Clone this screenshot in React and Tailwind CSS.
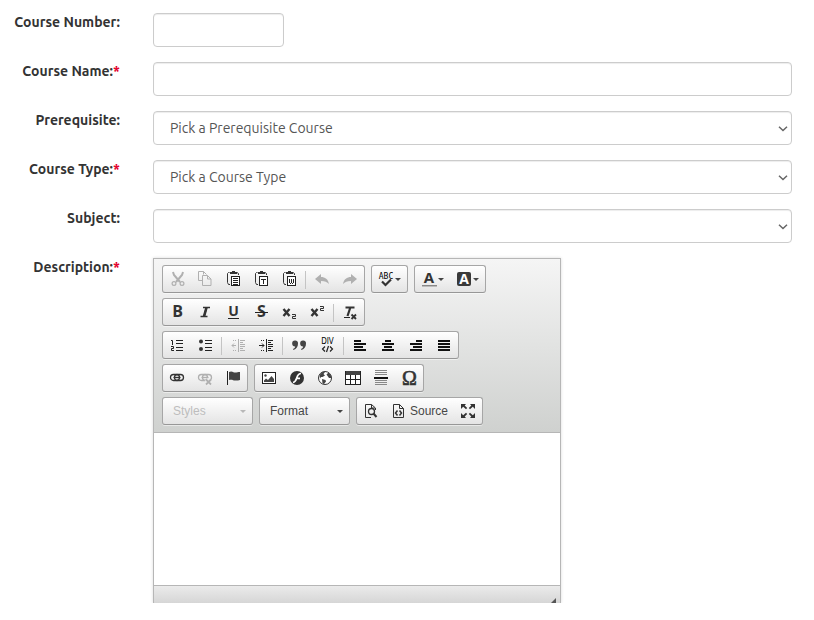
const DARK = "#222";
const MUTED = "#b0b0b0";

function Svg({ children, ...rest }) {
  return (
    <svg width="16" height="16" viewBox="0 0 16 16" fill="none" aria-hidden="true" className="block shrink-0 overflow-visible" {...rest}>
      {children}
    </svg>
  );
}

/* Filled rectangles given as [x, y, width, height] */
function Bars({ list, fill = DARK }) {
  return (
    <g fill={fill} shapeRendering="crispEdges">
      {list.map(([x, y, w, h], i) => (
        <rect key={i} x={x} y={y} width={w} height={h} />
      ))}
    </g>
  );
}

function Glyph({ x, y, size, weight = "bold", fill = "#333", italic, family = "'Open Sans', sans-serif", children }) {
  return (
    <text x={x} y={y} fontSize={size} fontWeight={weight} fontStyle={italic ? "italic" : "normal"} fill={fill} fontFamily={family} textAnchor="middle">
      {children}
    </text>
  );
}

function Cut() {
  return (
    <Svg stroke={MUTED}>
      <path d="M4 2l1 3 6 7M14 2l-1 3-6 7" strokeWidth="2" />
      <circle cx="5" cy="13.5" r="1.9" strokeWidth="1.2" />
      <circle cx="13" cy="13.5" r="1.9" strokeWidth="1.2" />
    </Svg>
  );
}

function Copy() {
  return (
    <Svg stroke={MUTED}>
      <path d="M5 10.5H1.5v-9h5l3 3M6.500 1.500v3" />
      <path d="M5.500 5.500h5l3.500 3.500v6.500H5.500zM10.500 5.500v3.500h3.500" />
    </Svg>
  );
}

function Clipboard({ children }) {
  return (
    <Svg>
      <path d="M4.500 2.500h-1l-1 1v9l1 2h1.500M12 2.500l1.500 1V5" stroke="#333" />
      <path d="M5 4V2h2V1h3v1h2v2z" fill="#333" />
      <rect x="6.500" y="6.500" width="8" height="9" fill="#fff" stroke={DARK} />
      {children}
    </Svg>
  );
}

const Paste = () => (
  <Clipboard>
    <Bars list={[[8, 8, 5, 1], [8, 10, 5, 1], [8, 12, 5, 1], [8, 14, 5, 1]]} />
  </Clipboard>
);
const PasteText = () => (
  <Clipboard>
    <Bars list={[[8, 9, 5, 1], [10, 9, 1, 5]]} />
  </Clipboard>
);
const PasteWord = () => (
  <Clipboard>
    <Bars list={[[8, 9, 1, 4], [10, 9, 1, 4], [12, 9, 1, 4], [9, 13, 1, 1], [11, 13, 1, 1]]} />
  </Clipboard>
);

const Undo = () => (
  <Svg>
    <path d="M1 9l6-5v3c4 0 7 2 8 7-2-2-4-3-8-3v3z" fill={MUTED} />
  </Svg>
);
const Redo = () => (
  <Svg>
    <path d="M15 9L9 4v3c-4 0-7 2-8 7 2-2 4-3 8-3v3z" fill={MUTED} />
  </Svg>
);

const Spell = () => (
  <Svg>
    <Glyph x="8" y="9" size="8" weight="normal" fill="#000" family="'DejaVu Sans Mono', monospace">ABC</Glyph>
    <path d="M4 11.500l3.500 3.500 5.500-5.500" stroke="#333" strokeWidth="2.200" />
  </Svg>
);
const TextColor = () => (
  <Svg>
    <Glyph x="8" y="13" size="15">A</Glyph>
    <Bars list={[[1, 15, 15, 1]]} fill="#888" />
    <Bars list={[[1, 16, 15, 1]]} fill="#bbb" />
  </Svg>
);
const BgColor = () => (
  <Svg>
    <rect x="1" y="2" width="14" height="14" rx="2" fill="#3a3a3a" />
    <Glyph x="8" y="14" size="14" fill="#fff">A</Glyph>
  </Svg>
);

const Bold = () => (
  <Svg>
    <Glyph x="8.500" y="14" size="16">B</Glyph>
  </Svg>
);
const Italic = () => (
  <Svg>
    <path d="M6 4.500h7M3.500 13.500h7M9.500 4.500l-2.500 9" stroke="#333" strokeWidth="1.600" />
    <path d="M9.500 4.500l-2.500 9" stroke="#333" strokeWidth="2.600" />
  </Svg>
);
const Underline = () => (
  <Svg>
    <Glyph x="8.500" y="13" size="14">U</Glyph>
    <Bars list={[[3, 15, 11, 1]]} />
  </Svg>
);
const Strike = () => (
  <Svg>
    <Glyph x="8.500" y="14" size="16">S</Glyph>
    <Bars list={[[2, 9, 13, 1]]} />
  </Svg>
);
const Cross = () => <path d="M2.500 6l6 7M8.500 6l-6 7" stroke="#333" strokeWidth="2.400" />;
const Subscript = () => (
  <Svg>
    <Cross />
    <path d="M11 11.500h3.500v2h-3v2H15" stroke="#333" />
  </Svg>
);
const Superscript = () => (
  <Svg>
    <Cross />
    <path d="M11 3.500h3.500v2h-3v2H15" stroke="#333" />
  </Svg>
);
const ClearFormat = () => (
  <Svg>
    <path d="M3.500 4.500h9M8.500 4l-3 9" stroke="#333" strokeWidth="2.200" />
    <Bars list={[[2, 14, 6, 1]]} />
    <path d="M9.500 11.500l4.500 4.500M14 11.500L9.500 16" stroke="#333" strokeWidth="1.800" />
  </Svg>
);

const LINE_ROWS = [4, 7, 11, 14];
const Numbered = () => (
  <Svg>
    <path d="M2 4.500h1.500V9M2 10.500h2.500v2h-2v2H5" stroke={DARK} />
    <Bars list={LINE_ROWS.map((y) => [7, y, 7, 1])} />
  </Svg>
);
const Bulleted = () => (
  <Svg>
    <circle cx="4" cy="5.500" r="2" fill="#333" />
    <circle cx="4" cy="13" r="2" fill="#333" />
    <Bars list={LINE_ROWS.map((y) => [8, y, 7, 1])} />
  </Svg>
);
function IndentBase({ color, children }) {
  return (
    <Svg>
      <Bars fill={color} list={[[8, 3, 1, 13], [10, 4, 5, 1], [10, 6, 3, 1], [10, 8, 5, 1], [10, 10, 5, 1], [10, 12, 3, 1], [10, 14, 5, 1], [3, 4, 1, 1], [5, 4, 1, 1], [3, 14, 1, 1], [5, 14, 1, 1]]} />
      {children}
    </Svg>
  );
}
const Outdent = () => (
  <IndentBase color={MUTED}>
    <path d="M6 9.500H2M4 7.500l-2 2 2 2" stroke={MUTED} />
  </IndentBase>
);
const Indent = () => (
  <IndentBase color={DARK}>
    <path d="M1 9.500h5M4 7.500l2 2-2 2" stroke={DARK} />
  </IndentBase>
);
const Quote = () => (
  <Svg fill="#444">
    <path d="M4 4.500a2.700 2.700 0 0 1 3 3c0 3-1.500 5.500-4.500 6.500l-.5-1c1.500-.8 2-1.500 2.200-2.600A2.900 2.900 0 0 1 4 4.500zM12 4.500a2.700 2.700 0 0 1 3 3c0 3-1.500 5.500-4.500 6.500l-.5-1c1.500-.8 2-1.500 2.200-2.600A2.900 2.900 0 0 1 12 4.500z" />
  </Svg>
);
const Div = () => (
  <Svg>
    <Glyph x="8.500" y="8" size="8" weight="normal" fill="#000" family="'DejaVu Sans Condensed', 'DejaVu Sans', sans-serif">DIV</Glyph>
    <path d="M6 10.500L3.500 13 6 15.500M11 10.500l2.500 2.500-2.500 2.500M9.500 10l-2 6" stroke="#222" strokeWidth="1.200" />
  </Svg>
);
const AlignLeft = () => (
  <Svg>
    <Bars fill="#111" list={[[2, 4, 7, 2], [2, 7, 12, 2], [2, 10, 9, 2], [2, 13, 12, 2]]} />
  </Svg>
);
const AlignCenter = () => (
  <Svg>
    <Bars fill="#111" list={[[5, 4, 6, 2], [2, 7, 12, 2], [4, 10, 8, 2], [2, 13, 12, 2]]} />
  </Svg>
);
const AlignRight = () => (
  <Svg>
    <Bars fill="#111" list={[[8, 4, 6, 2], [2, 7, 12, 2], [5, 10, 9, 2], [2, 13, 12, 2]]} />
  </Svg>
);
const AlignJustify = () => (
  <Svg>
    <Bars fill="#111" list={[[2, 4, 12, 2], [2, 7, 12, 2], [2, 10, 12, 2], [2, 13, 12, 2]]} />
  </Svg>
);

function Chain({ color }) {
  return (
    <g stroke={color} strokeWidth="1.300">
      <rect x="1.500" y="5.500" width="9" height="6" rx="3" />
      <rect x="5.500" y="5.500" width="9" height="6" rx="3" />
      <path d="M4.500 8.500h7" />
    </g>
  );
}
const Link = () => (
  <Svg>
    <Chain color="#333" />
  </Svg>
);
const Unlink = () => (
  <Svg>
    <Chain color={MUTED} />
    <path d="M9 10.500l5 5M14 10.500l-5 5" stroke="#eee" strokeWidth="4" />
    <path d="M9 10.500l5 5M14 10.500l-5 5" stroke={MUTED} strokeWidth="1.800" />
  </Svg>
);
const Flag = () => (
  <Svg>
    <Bars list={[[2, 2, 1, 14]]} />
    <path d="M4 3c3-1.500 4 .5 6 .5s3-.5 5-.5v8c-2 .5-3 .7-5 .5S7 10 4 11z" fill="#444" />
  </Svg>
);
const Image = () => (
  <Svg>
    <rect x="1.500" y="3.500" width="13" height="11" fill="#fff" stroke={DARK} />
    <circle cx="4.500" cy="6.500" r="1.200" fill="#444" />
    <path d="M3 13V11.500l2-2 2 1.500 3.500-4L13 10v3z" fill="#444" />
  </Svg>
);
const Flash = () => (
  <Svg>
    <circle cx="8" cy="9" r="7" fill="#333" />
    <path d="M12 4.500c-2.500 0-3.500 2-4.300 4.500S6.500 13 4 13.500M7.500 9.300h3.500" stroke="#fff" strokeWidth="1.700" />
  </Svg>
);
const Globe = () => (
  <Svg>
    <circle cx="8" cy="9" r="6.500" fill="#fff" stroke="#333" />
    <path d="M2.500 6l3-3 2.500 0L6.500 5l1.500 1.500L5.500 8 4 8 3 9.500zM9.500 5.500l2-2 2.500 3 .5 2.500-2.500 0zM5 10l3.500 1 .5 1.500-2 2.500-1.500-.5z" fill="#444" />
  </Svg>
);
const Table = () => (
  <Svg>
    <rect x="0" y="2" width="16" height="14" fill="#fff" />
    <Bars fill="#444" list={[[0, 2, 16, 4]]} />
    <Bars list={[[0, 2, 1, 14], [5, 6, 1, 10], [10, 6, 1, 10], [15, 2, 1, 14], [0, 10, 16, 1], [0, 15, 16, 1]]} />
  </Svg>
);
const Rule = () => (
  <Svg>
    <Bars fill="#888" list={[[2, 1, 12, 1], [2, 3, 12, 1], [2, 5, 12, 1], [2, 11, 12, 1], [2, 13, 12, 1], [2, 15, 12, 1]]} />
    <Bars fill="#111" list={[[1, 8, 14, 2]]} />
  </Svg>
);
const Omega = () => (
  <Svg>
    <Glyph x="8.500" y="16" size="20" weight="normal" family="'Liberation Serif', serif">
      <tspan stroke="#333" strokeWidth="0.6">Ω</tspan>
    </Glyph>
  </Svg>
);
const Preview = () => (
  <Svg stroke="#333">
    <path d="M8 15.500H2.500v-13h6l4 3.500v2M8.500 2.500V6H12" />
    <circle cx="8.500" cy="9.500" r="3" strokeWidth="1.300" />
    <path d="M10.500 11.500l3 3.500" strokeWidth="2" />
  </Svg>
);
const SourceIcon = () => (
  <Svg stroke="#333">
    <path d="M2.500 2.500h6l4 4v9h-10zM8.500 2.500v4h4" />
    <path d="M6.500 8.500l-2 2.500 2 2.500M8.500 8.500l2 2.500-2 2.500" strokeWidth="1.500" />
  </Svg>
);
const Maximize = () => (
  <Svg>
    <path d="M1 2h5L4.700 3.500l2.500 2.500L6 7.200 3.200 4.700 1 7zM15 2v5l-2.200-2.300L10 7.200 8.800 6l2.500-2.500L10 2zM1 16v-5l2.200 2.300L6 10.800 7.200 12l-2.500 2.500L6 16zM15 16h-5l1.300-1.500L8.800 12 10 10.800l2.800 2.500L15 11z" fill="#333" />
  </Svg>
);

function Caret({ color = "#444" }) {
  return (
    <svg width="7" height="16" viewBox="0 0 7 16" aria-hidden="true" className="block shrink-0">
      <path d="M1 8h6l-3 3z" fill={color} />
    </svg>
  );
}

function ToolButton({ label, icon: Icon, disabled, menu, text }) {
  return (
    <button type="button" title={label} aria-label={label} disabled={disabled} className="flex h-[26px] items-start px-1.5 pt-1">
      <Icon />
      {menu && <Caret />}
      {text && <span className="pl-[3px] text-[12px] leading-[19px] text-[#474747]">{text}</span>}
    </button>
  );
}

const Separator = () => <span className="mx-0.5 mt-[5px] h-[18px] w-px bg-[#c4c4c4]" />;

const BOX = "h-7 rounded-[3px] border border-[#a6a6a6] border-b-[#979797] bg-linear-to-b from-white to-[#e4e4e4] shadow-[0_1px_0_rgba(255,255,255,0.5)]";

const Group = ({ children }) => (
  <div role="group" className={`flex ${BOX}`}>{children}</div>
);

const Row = ({ children }) => <div className="flex gap-1.5">{children}</div>;

function Combo({ label, disabled }) {
  return (
    <div className="relative">
      <select
        aria-label={label}
        disabled={disabled}
        className={`block w-[91px] appearance-none pl-[10px] text-[12px] text-[#474747] disabled:text-[#bdbdbd] disabled:opacity-100 ${BOX}`}
      >
        <option>{label}</option>
      </select>
      <span className="pointer-events-none absolute top-[5px] right-[7px]">
        <Caret color={disabled ? "#b8b8b8" : "#444"} />
      </span>
    </div>
  );
}

function Editor() {
  return (
    <div className="w-full max-w-[408px] border border-b-0 border-[#b6b6b6] font-['Liberation_Sans',Arial,sans-serif] shadow-[0_0_3px_rgba(0,0,0,0.15)]">
      <div role="toolbar" aria-label="Editor toolbar" className="flex flex-col gap-[5px] border-b border-[#b6b6b6] bg-linear-to-b from-[#f5f5f5] to-[#cfd1cf] px-2 pt-1.5 pb-[7px]">
        <Row>
          <Group>
            <ToolButton label="Cut" icon={Cut} disabled />
            <ToolButton label="Copy" icon={Copy} disabled />
            <ToolButton label="Paste" icon={Paste} />
            <ToolButton label="Paste as plain text" icon={PasteText} />
            <ToolButton label="Paste from Word" icon={PasteWord} />
            <Separator />
            <ToolButton label="Undo" icon={Undo} disabled />
            <ToolButton label="Redo" icon={Redo} disabled />
          </Group>
          <Group>
            <ToolButton label="Spell Check" icon={Spell} menu />
          </Group>
          <Group>
            <ToolButton label="Text Color" icon={TextColor} menu />
            <ToolButton label="Background Color" icon={BgColor} menu />
          </Group>
        </Row>
        <Row>
          <Group>
            <ToolButton label="Bold" icon={Bold} />
            <ToolButton label="Italic" icon={Italic} />
            <ToolButton label="Underline" icon={Underline} />
            <ToolButton label="Strikethrough" icon={Strike} />
            <ToolButton label="Subscript" icon={Subscript} />
            <ToolButton label="Superscript" icon={Superscript} />
            <Separator />
            <ToolButton label="Remove Format" icon={ClearFormat} />
          </Group>
        </Row>
        <Row>
          <Group>
            <ToolButton label="Numbered List" icon={Numbered} />
            <ToolButton label="Bulleted List" icon={Bulleted} />
            <Separator />
            <ToolButton label="Decrease Indent" icon={Outdent} disabled />
            <ToolButton label="Increase Indent" icon={Indent} />
            <Separator />
            <ToolButton label="Block Quote" icon={Quote} />
            <ToolButton label="Create Div Container" icon={Div} />
            <Separator />
            <ToolButton label="Align Left" icon={AlignLeft} />
            <ToolButton label="Center" icon={AlignCenter} />
            <ToolButton label="Align Right" icon={AlignRight} />
            <ToolButton label="Justify" icon={AlignJustify} />
          </Group>
        </Row>
        <Row>
          <Group>
            <ToolButton label="Link" icon={Link} />
            <ToolButton label="Unlink" icon={Unlink} disabled />
            <ToolButton label="Anchor" icon={Flag} />
          </Group>
          <Group>
            <ToolButton label="Image" icon={Image} />
            <ToolButton label="Flash" icon={Flash} />
            <ToolButton label="IFrame" icon={Globe} />
            <ToolButton label="Table" icon={Table} />
            <ToolButton label="Horizontal Line" icon={Rule} />
            <ToolButton label="Special Character" icon={Omega} />
          </Group>
        </Row>
        <Row>
          <Combo label="Styles" disabled />
          <Combo label="Format" />
          <Group>
            <ToolButton label="Preview" icon={Preview} />
            <ToolButton label="Source" icon={SourceIcon} text="Source" />
            <ToolButton label="Maximize" icon={Maximize} />
          </Group>
        </Row>
      </div>
      <textarea id="description" className="block h-[152px] w-full resize-none bg-white p-2 text-sm outline-none" />
      <div className="flex h-[18px] items-end justify-end border-t border-[#b6b6b6] bg-linear-to-b from-[#ebebeb] to-[#d6d6d6] pr-1">
        <svg width="5" height="5" viewBox="0 0 5 5" aria-hidden="true">
          <path d="M5 0v5H0z" fill="#555" />
        </svg>
      </div>
    </div>
  );
}

function Field({ id, label, required, children }) {
  return (
    <div className="flex items-start">
      <label htmlFor={id} className="w-[120px] shrink-0 text-right text-[14px] leading-[18px] font-bold whitespace-nowrap text-[#333]">
        {label}:{required && <span className="text-[#e4002b]">*</span>}
      </label>
      <div className="ml-[33px] min-w-0 flex-1">{children}</div>
    </div>
  );
}

const CONTROL = "block h-[34px] rounded-[4px] border border-[#ccc] bg-white px-4 text-[14px] text-[#555] shadow-[inset_0_1px_1px_rgba(0,0,0,0.075)]";

function Select({ id, children }) {
  return (
    <div className="relative">
      <select id={id} className={`w-full appearance-none ${CONTROL}`}>
        <option>{children}</option>
      </select>
      <svg width="10" height="6" viewBox="0 0 10 6" fill="none" aria-hidden="true" className="pointer-events-none absolute top-[15px] right-1">
        <path d="M1 .8l4 3.700 4-3.700" stroke="#666" strokeWidth="1.500" />
      </svg>
    </div>
  );
}

export default function App() {
  return (
    <form className="flex flex-col gap-[15px] bg-white pt-[13px] pr-[22px] font-['Ubuntu','Open_Sans',sans-serif]">
      <Field id="number" label="Course Number">
        <input id="number" type="text" className={`w-[131px] ${CONTROL}`} />
      </Field>
      <Field id="name" label="Course Name" required>
        <input id="name" type="text" className={`w-full ${CONTROL}`} />
      </Field>
      <Field id="prerequisite" label="Prerequisite">
        <Select id="prerequisite">Pick a Prerequisite Course</Select>
      </Field>
      <Field id="type" label="Course Type" required>
        <Select id="type">Pick a Course Type</Select>
      </Field>
      <Field id="subject" label="Subject">
        <Select id="subject" />
      </Field>
      <Field id="description" label="Description" required>
        <Editor />
      </Field>
    </form>
  );
}
